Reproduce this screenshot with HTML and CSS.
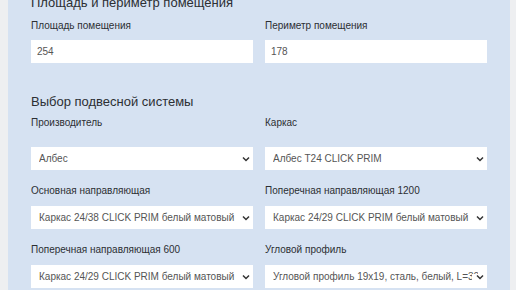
FILE: index.html
```html
<!DOCTYPE html>
<html lang="ru">
<head>
<meta charset="utf-8">
<link rel="stylesheet" href="styles.css">
</head>
<body>
<div class="page">
  <div class="panel">
    <h2 class="title title-first">Площадь и периметр помещения</h2>
    <div class="row row-area">
      <div class="field">
        <label class="label">Площадь помещения</label>
        <input class="control" type="text" value="254">
      </div>
      <div class="field">
        <label class="label">Периметр помещения</label>
        <input class="control" type="text" value="178">
      </div>
    </div>

    <h2 class="title title-second">Выбор подвесной системы</h2>
    <div class="row row-first">
      <div class="field">
        <label class="label">Производитель</label>
        <div class="select-wrap">
          <select class="control select"><option>Албес</option></select>
          <svg class="chev" width="8" height="6" viewBox="0 0 8 6"><path d="M1 1.5 L4 4.5 L7 1.5" fill="none" stroke="#333" stroke-width="1.5"/></svg>
        </div>
      </div>
      <div class="field">
        <label class="label">Каркас</label>
        <div class="select-wrap">
          <select class="control select"><option>Албес T24 CLICK PRIM</option></select>
          <svg class="chev" width="8" height="6" viewBox="0 0 8 6"><path d="M1 1.5 L4 4.5 L7 1.5" fill="none" stroke="#333" stroke-width="1.5"/></svg>
        </div>
      </div>
    </div>
    <div class="row">
      <div class="field">
        <label class="label">Основная направляющая</label>
        <div class="select-wrap">
          <select class="control select"><option>Каркас 24/38 CLICK PRIM белый матовый</option></select>
          <svg class="chev" width="8" height="6" viewBox="0 0 8 6"><path d="M1 1.5 L4 4.5 L7 1.5" fill="none" stroke="#333" stroke-width="1.5"/></svg>
        </div>
      </div>
      <div class="field">
        <label class="label">Поперечная направляющая 1200</label>
        <div class="select-wrap">
          <select class="control select"><option>Каркас 24/29 CLICK PRIM белый матовый</option></select>
          <svg class="chev" width="8" height="6" viewBox="0 0 8 6"><path d="M1 1.5 L4 4.5 L7 1.5" fill="none" stroke="#333" stroke-width="1.5"/></svg>
        </div>
      </div>
    </div>
    <div class="row">
      <div class="field">
        <label class="label">Поперечная направляющая 600</label>
        <div class="select-wrap">
          <select class="control select"><option>Каркас 24/29 CLICK PRIM белый матовый</option></select>
          <svg class="chev" width="8" height="6" viewBox="0 0 8 6"><path d="M1 1.5 L4 4.5 L7 1.5" fill="none" stroke="#333" stroke-width="1.5"/></svg>
        </div>
      </div>
      <div class="field">
        <label class="label">Угловой профиль</label>
        <div class="select-wrap">
          <select class="control select"><option>Угловой профиль 19x19, сталь, белый, L=3000</option></select>
          <svg class="chev" width="8" height="6" viewBox="0 0 8 6"><path d="M1 1.5 L4 4.5 L7 1.5" fill="none" stroke="#333" stroke-width="1.5"/></svg>
        </div>
      </div>
    </div>
  </div>
</div>
</body>
</html>
```

FILE: styles.css
```css
html, body {
  margin: 0;
  padding: 0;
  background: #eeeff1;
  font-family: "Liberation Sans", Arial, sans-serif;
  overflow: hidden;
}
.page {
  padding-left: 8px;
  height: 290px;
  overflow: hidden;
}
.panel {
  width: 502px;
  box-sizing: border-box;
  background: #d6e2f2;
  padding: 0 23px 20px 23px;
  height: 320px;
}
.title {
  margin: 0;
  font-size: 13px;
  line-height: 16px;
  font-weight: normal;
  color: #2c2f33;
}
.title-first {
  margin-top: -5px;
}
.title-second {
  margin-top: 31px;
}
.row {
  display: grid;
  grid-template-columns: 222px 222px;
  column-gap: 12px;
  margin-top: 15px;
}
.row-area {
  margin-top: 9px;
}
.row-first {
  margin-top: 7px;
}
.field {
  display: flex;
  flex-direction: column;
}
.label {
  font-size: 10px;
  line-height: 12px;
  color: #2c2f33;
  margin-bottom: 8px;
}
.row-first .label {
  margin-bottom: 18px;
}
.row + .row .label {
  margin-bottom: 9px;
}
.control {
  display: block;
  width: 222px;
  height: 23px;
  box-sizing: border-box;
  border: none;
  border-radius: 0;
  background: #fff;
  margin: 0;
  padding: 0 6px;
  font-family: "Liberation Sans", Arial, sans-serif;
  font-size: 10px;
  color: #555;
  outline: none;
}
.select-wrap {
  position: relative;
  width: 222px;
}
.select {
  -webkit-appearance: none;
  appearance: none;
  padding: 0 9px 0 8px;
  height: 23px;
}
.chev {
  position: absolute;
  right: 3px;
  top: 9px;
  padding-left: 4px;
  background: #fff;
  pointer-events: none;
}
```
